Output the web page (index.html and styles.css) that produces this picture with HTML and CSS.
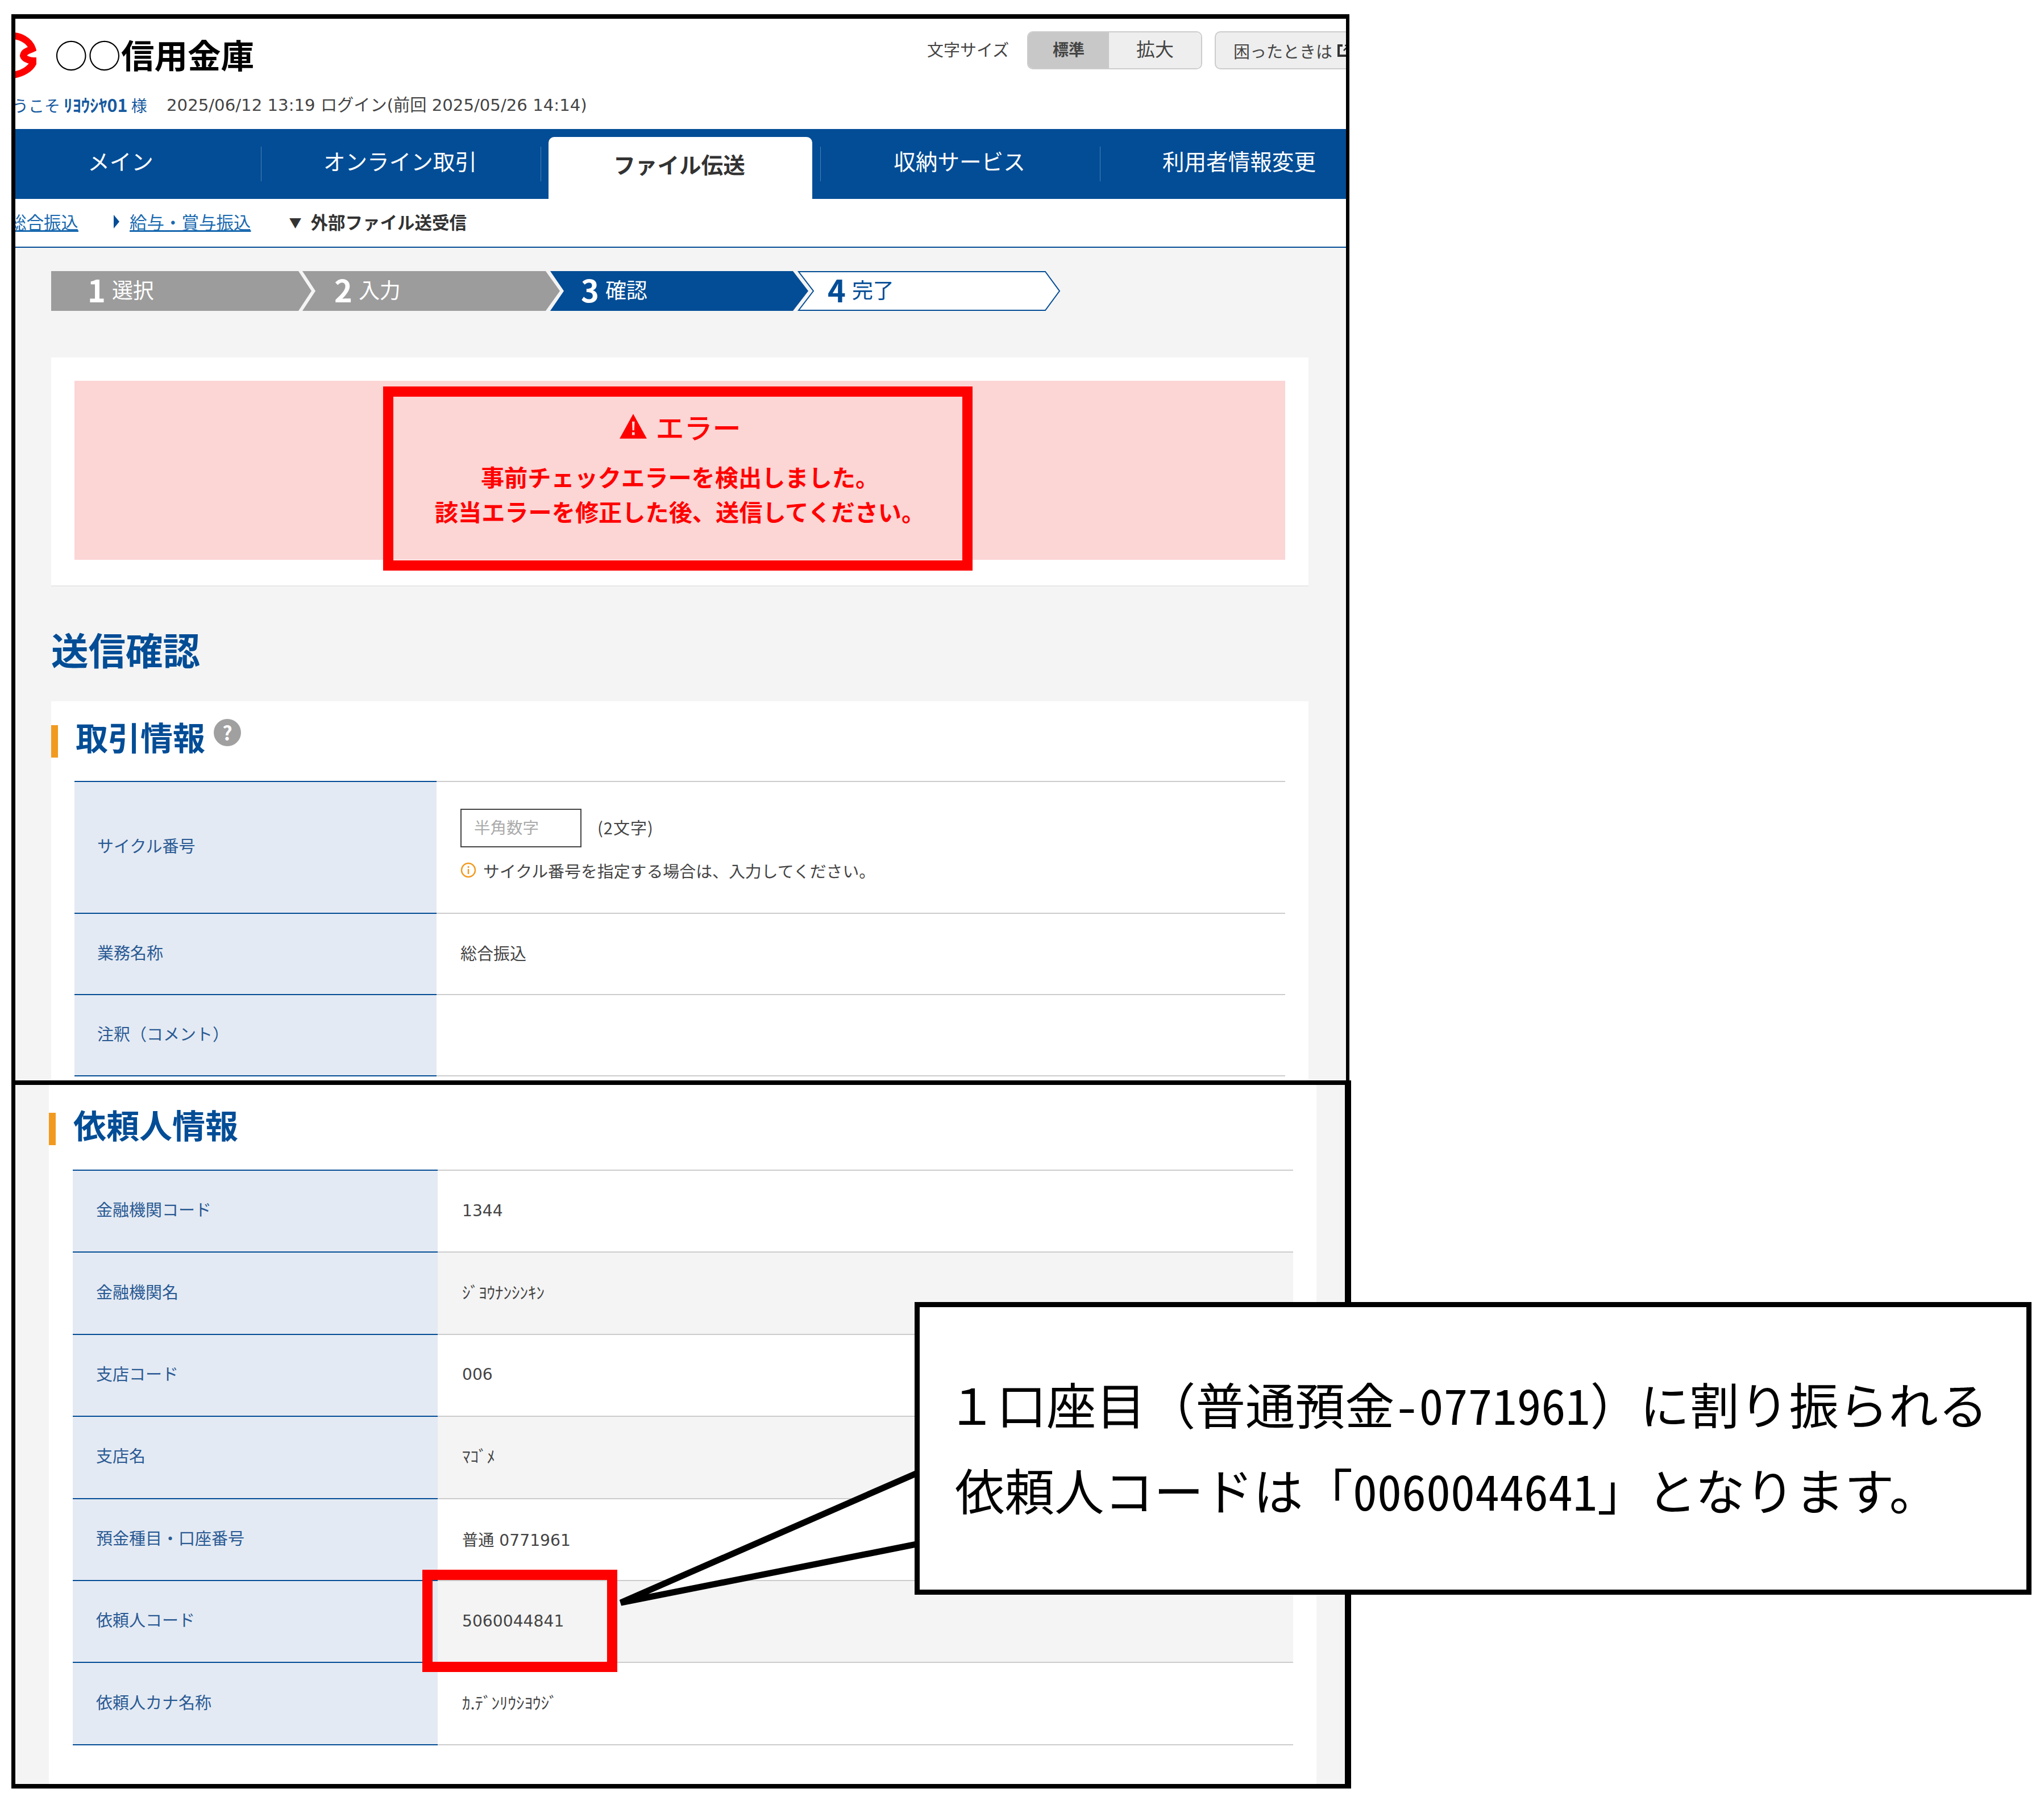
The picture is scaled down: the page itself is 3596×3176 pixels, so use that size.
FILE: index.html
```html
<!DOCTYPE html>
<html lang="ja">
<head>
<meta charset="utf-8">
<title>送信確認</title>
<link rel="stylesheet" href="styles.css">
</head>
<body>
<div class="canvas">
  <section class="frame frame-top">
    <header class="header">
      <div class="header-top">
        <div class="brand">
          <svg class="logo" viewBox="0 0 37 83" aria-hidden="true"><path d="M-10 6 C8 5 25 14 30 29 C24 32 15 33 14 41 C15 46 24 50 33 50 C28 64 12 74 -10 76" fill="none" stroke="#f00" stroke-width="12"/></svg>
          <h1 class="bank-name"><span class="bank-mark">○○</span>信用金庫</h1>
        </div>
        <div class="tools">
          <span class="tools-label">文字サイズ</span>
          <div class="size-group"><span class="size size-on">標準</span><span class="size">拡大</span></div>
          <div class="help">困ったときは<svg class="ext" viewBox="0 0 24 24" aria-hidden="true"><path d="M10 3H3v18h18v-7" fill="none" stroke="#333" stroke-width="4"/><path d="M12 12l8-8M14 3h7v7" fill="none" stroke="#333" stroke-width="2.5"/></svg></div>
        </div>
      </div>
      <p class="welcome"><span class="who">ようこそ <b>ﾘﾖｳｼﾔ01</b> 様</span><span class="stamp">2025/06/12 13:19 ログイン(前回 2025/05/26 14:14)</span></p>
    </header>
    <nav class="nav">
      <div class="tab"><a>メイン</a></div>
      <div class="tab"><a>オンライン取引</a></div>
      <div class="tab tab-on"><a>ファイル伝送</a></div>
      <div class="tab"><a>収納サービス</a></div>
      <div class="tab"><a>利用者情報変更</a></div>
    </nav>
    <div class="subnav">
      <a class="sub-link">総合振込</a>
      <span class="sub-item"><i class="tri-right"></i><a class="sub-link">給与・賞与振込</a></span>
      <span class="sub-item sub-current"><span class="tri-down">▼</span><b>外部ファイル送受信</b></span>
    </div>
    <main class="main">
      <div class="steps">
        <svg class="steps-bg" viewBox="0 0 1776 70" aria-hidden="true">
          <polygon points="0,0 435,0 458,35 435,70 0,70" fill="#9c9c9c"/>
          <polygon points="442,0 870,0 895,35 870,70 442,70 465,35" fill="#9c9c9c"/>
          <polygon points="878,0 1305,0 1332,35 1305,70 878,70 902,35" fill="#034d96"/>
          <polygon points="1315,1 1749,1 1774,35 1749,69 1315,69 1341,35" fill="#fff" stroke="#034d96" stroke-width="2"/>
        </svg>
        <div class="step"><b>1</b>選択</div>
        <div class="step"><b>2</b>入力</div>
        <div class="step"><b>3</b>確認</div>
        <div class="step step-next"><b>4</b>完了</div>
      </div>
      <div class="alert-card">
        <div class="alert">
          <div class="alert-title"><svg class="warn" viewBox="0 0 48 44" aria-hidden="true"><path d="M24 1 L47 43 H1 Z" fill="#f00"/><path d="M22 14h4.500l-.8 15h-3zM22 32h4.500v5H22z" fill="#fcd5d5"/></svg>エラー</div>
          <p class="alert-msg">事前チェックエラーを検出しました。<br>該当エラーを修正した後、送信してください。</p>
        </div>
      </div>
      <h2 class="page-title">送信確認</h2>
      <section class="card">
        <h3 class="sec-title">取引情報<span class="q">?</span></h3>
        <dl class="table">
          <div class="row row-tall">
            <dt>サイクル番号</dt>
            <dd class="dd-form">
              <div class="input-line"><span class="input">半角数字</span><span class="input-hint">(2文字)</span></div>
              <div class="note"><svg class="info" viewBox="0 0 28 28" aria-hidden="true"><circle cx="14" cy="14" r="12" fill="none" stroke="#f29a1f" stroke-width="2.500"/><path d="M14 7v3M14 12v9" stroke="#f29a1f" stroke-width="2.500"/></svg>サイクル番号を指定する場合は、入力してください。</div>
            </dd>
          </div>
          <div class="row"><dt>業務名称</dt><dd>総合振込</dd></div>
          <div class="row"><dt>注釈（コメント）</dt><dd></dd></div>
        </dl>
      </section>
    </main>
  </section>

  <section class="frame frame-bottom">
    <section class="card card-b">
      <h3 class="sec-title">依頼人情報</h3>
      <dl class="table table-b">
        <div class="row"><dt>金融機関コード</dt><dd class="num">1344</dd></div>
        <div class="row row-alt"><dt>金融機関名</dt><dd class="kana">ｼﾞﾖｳﾅﾝｼﾝｷﾝ</dd></div>
        <div class="row"><dt>支店コード</dt><dd class="num">006</dd></div>
        <div class="row row-alt"><dt>支店名</dt><dd class="kana">ﾏｺﾞﾒ</dd></div>
        <div class="row"><dt>預金種目・口座番号</dt><dd class="num">普通 0771961</dd></div>
        <div class="row row-alt"><dt>依頼人コード</dt><dd class="num">5060044841</dd></div>
        <div class="row"><dt>依頼人カナ名称</dt><dd class="kana">ｶ.ﾃﾞﾝﾘｳｼﾖｳｼﾞ</dd></div>
      </dl>
    </section>
  </section>

  <div class="mark mark-alert"></div>
  <div class="mark mark-code"></div>
  <svg class="tail" viewBox="0 0 540 245" aria-hidden="true"><polygon points="540,8 14,238 540,134" fill="#fff" stroke="#000" stroke-width="11"/></svg>
  <div class="callout">
    <p class="callout-first">１口座目（普通預金<span class="hw">-0771961</span>）に割り振られる</p>
    <p>依頼人コードは「<span class="hw">0060044641</span>」となります。</p>
  </div>
</div>
</body>
</html>
```
FILE: styles.css
```css
* { box-sizing: border-box; }
html, body { margin: 0; padding: 0; background: #fff; }
body {
  font-family: "Noto Sans CJK JP", sans-serif;
  font-size: 29px;
  color: #444;
}
h1, h2, h3, p, dl, dd { margin: 0; }
a { color: inherit; }

.canvas { position: relative; width: 3596px; height: 3176px; padding: 25px 0 0 20px; }

.frame { overflow: hidden; border: solid #000; }
.frame-top { width: 2354px; height: 1876px; border-width: 8px 6px 0 7px; background: #fff; }
.frame-bottom { width: 2357px; height: 1246px; border-width: 8px 11px 8px 7px; background: #f4f4f4; }

/* header */
.header { height: 194px; padding-top: 22px; }
.header-top { display: flex; height: 85px; }
.brand { display: flex; flex: 1; align-items: center; gap: 32px; }
.logo { width: 37px; height: 83px; margin-top: 2px; flex: none; }
.bank-name { font-size: 58.500px; line-height: 79px; padding-bottom: 6px; font-weight: 700; color: #000; }
.bank-mark { font-weight: 400; }
.tools { display: flex; flex: 0 0 737px; min-width: 0; align-items: flex-start; }
.tools-label { flex: none; width: 176px; line-height: 63px; font-size: 29px; }
.size-group { display: flex; flex: none; width: 308px; height: 67px; border: 2px solid #ccc; border-radius: 10px; overflow: hidden; }
.size { display: flex; flex: 1; align-items: center; justify-content: center; padding-bottom: 8px; background: #eee; font-size: 33px; }
.size-on { flex: 0 0 142px; padding-bottom: 5px; background: #c8c8c8; font-size: 28px; font-weight: 700; }
.help { display: flex; align-items: center; flex: none; width: 260px; height: 67px; margin-left: 22px; padding-left: 31px; border: 2px solid #ccc; border-radius: 10px; background: #eee; font-size: 29px; white-space: nowrap; }
.ext { flex: none; width: 24px; height: 24px; margin-left: 8px; }
.welcome { display: flex; height: 40px; line-height: 38px; margin-top: 25px; margin-left: -33px; font-size: 28px; white-space: nowrap; }
.who { width: 299px; color: #175a9f; }
.who b { font-size: 30.500px; font-weight: 700; }
.stamp { font-family: "DejaVu Sans", "Noto Sans CJK JP", sans-serif; font-size: 29.200px; line-height: 40px; color: #444; }

/* nav */
.nav { display: flex; height: 123px; background: #034d96; overflow: hidden; }
.tab { position: relative; flex: 0 0 492px; display: flex; color: #fff; font-size: 38.600px; }
.tab:first-child { margin-left: -59px; }
.tab::after { content: ""; position: absolute; right: 0; top: 31px; width: 1px; height: 61px; background: #4c80b4; }
.tab a { flex: 1; height: 116px; padding-right: 4px; line-height: 110px; text-align: center; }
.tab-on a { height: 109px; margin: 14px 15px 0 13px; line-height: 94px; background: #fff; border-radius: 10px 10px 0 0; color: #333; font-weight: 700; }

/* sub nav */
.subnav { display: flex; align-items: center; height: 86px; margin-left: -11px; padding-bottom: 5px; border-bottom: 2px solid #034d96; font-size: 30.500px; white-space: nowrap; }
.sub-link { color: #1a6ab0; text-decoration: underline; }
.sub-item { display: flex; align-items: center; margin-left: 62px; }
.sub-current { margin-left: 67px; color: #333; }
.sub-current b { font-weight: 700; }
.tri-right { width: 0; height: 0; margin-right: 18px; border-style: solid; border-width: 12px 0 12px 10px; border-color: transparent transparent transparent #034d96; }
.tri-down { margin-right: 16px; font-size: 22px; color: #333; }

/* main */
.main { height: 1465px; padding: 41px 66px 0 63px; background: #f4f4f4; overflow: hidden; }
.steps { position: relative; display: flex; width: 1776px; height: 70px; }
.steps-bg { position: absolute; left: 0; top: 0; width: 1776px; height: 70px; }
.step { position: relative; display: flex; align-items: center; flex: 0 0 434px; padding-left: 64px; padding-bottom: 6px; color: #fff; font-size: 37px; }
.step b { margin-right: 11px; font-size: 54px; font-weight: 700; line-height: 66px; }
.step-next { color: #034d96; }

/* alert */
.alert-card { height: 401px; margin-top: 82px; padding: 41px 41px 0; background: #fff; box-shadow: 0 2px 0 #e8e8e8; }
.alert { height: 315px; padding-top: 54px; background: #fcd5d5; color: #f00; text-align: center; }
.alert-title { display: flex; align-items: center; justify-content: center; gap: 15px; height: 52px; font-size: 50px; font-weight: 500; line-height: 52px; }
.warn { width: 50px; height: 46px; }
.alert-msg { margin-top: 32px; font-size: 41.200px; line-height: 61px; font-weight: 700; }

.page-title { height: 120px; margin-top: 84px; font-size: 65.500px; line-height: 56px; font-weight: 700; color: #034d96; }

/* cards */
.card { min-height: 800px; padding: 42px 41px 0; background: #fff; }
.sec-title { display: flex; align-items: flex-start; height: 57px; margin-left: -41px; padding-left: 31px; border-left: 12px solid #f29a1f; font-size: 57px; line-height: 38px; font-weight: 700; color: #034d96; }
.q { display: flex; align-items: center; justify-content: center; width: 48px; height: 48px; margin: -11px 0 0 15px; border-radius: 50%; background: #a0a0a0; color: #fff; font-size: 34px; line-height: 1; }

/* tables */
.table { position: relative; margin-top: 41px; border-top: 2px solid #ccc; }
.row { display: grid; grid-template-columns: 637px 1fr; height: 143px; }
.row-tall { height: 232px; }
.row dt { display: flex; align-items: center; padding-left: 40px; padding-bottom: 8px; background: #e4eaf3; border-bottom: 2px solid #034d96; color: #2a5a94; }
.row:first-child dt { box-shadow: 0 -2px 0 #034d96; }
.row dd { display: flex; align-items: center; padding-left: 42px; padding-bottom: 6px; border-bottom: 2px solid #ccc; }
.row-alt dd { background: #f4f4f4; }
.row .num { padding-bottom: 2px; font-family: "DejaVu Sans", "Noto Sans CJK JP", sans-serif; font-size: 28.200px; }
.kana { font-size: 29px; }
.row .dd-form { display: block; padding-top: 47px; padding-bottom: 0; }
.input-line { display: flex; align-items: center; gap: 28px; height: 68px; }
.input { width: 213px; height: 68px; padding-left: 22px; border: 2px solid #444; font-size: 28.500px; line-height: 59px; color: #aaa; }
.input-hint { padding-bottom: 4px; letter-spacing: 1px; }
.note { display: flex; align-items: center; gap: 12px; height: 40px; margin-top: 20px; font-size: 28.900px; }
.info { width: 28px; height: 28px; flex: none; }

/* bottom frame */
.card-b { width: 2230px; min-height: 1230px; margin-left: 59px; padding-top: 49px; padding-left: 42px; }
.card-b .sec-title { margin-left: -42px; font-size: 58px; line-height: 41px; }
.table-b { margin-top: 43px; }
.table-b .row { grid-template-columns: 642px 1fr; height: 144.400px; }
.table-b .row dt { padding-left: 41px; }
.table-b .row dd { padding-left: 43px; }
.table-b .row .num { padding-left: 43px; }

/* overlays */
.mark { position: absolute; border: 18px solid #f00; }
.mark-alert { left: 674px; top: 680px; width: 1037px; height: 324px; }
.mark-code { left: 743px; top: 2762px; width: 343px; height: 180px; }
.tail { position: absolute; left: 1078px; top: 2582px; width: 540px; height: 245px; }
.callout { position: absolute; left: 1609px; top: 2291px; width: 1965px; height: 515px; padding-left: 62px; padding-top: 94px; border: 9px solid #000; background: #fff; color: #000; font-size: 87.500px; line-height: 150px; white-space: nowrap; }
.callout-first { margin-left: -14px; }
.hw { font-size: 86px; font-feature-settings: "hwid"; }
```
